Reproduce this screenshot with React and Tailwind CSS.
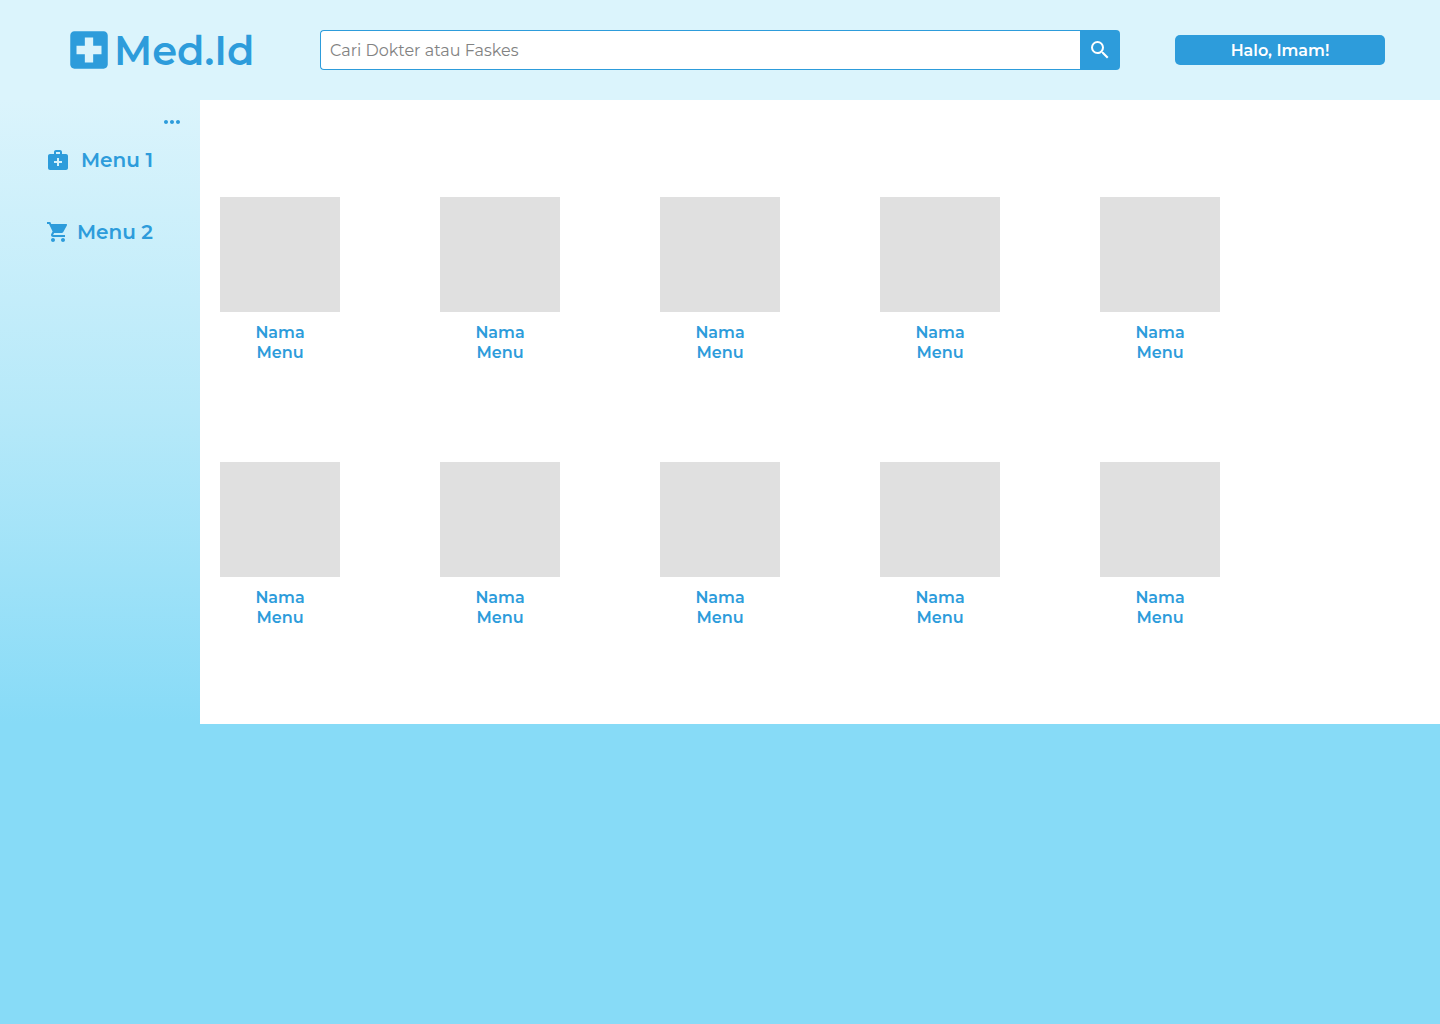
import {
  MdLocalHospital,
  MdMedicalServices,
  MdMoreHoriz,
  MdSearch,
  MdShoppingCart,
} from "react-icons/md";

const rows = [
  ["a1", "a2", "a3", "a4", "a5"],
  ["b1", "b2", "b3", "b4", "b5"],
];

const links = [
  { label: "Menu 1", Icon: MdMedicalServices },
  { label: "Menu 2", Icon: MdShoppingCart },
];

function Header() {
  return (
    <header className="flex h-[100px] items-center bg-[#dbf4fc]">
      <a href="#" className="flex w-80 shrink-0 items-center pl-16">
        <MdLocalHospital size={50} aria-hidden="true" />
        <span className="pt-0.5 text-[40px] leading-[50px] font-semibold">Med.Id</span>
      </a>
      <form className="flex h-10 flex-1" onSubmit={(e) => e.preventDefault()}>
        <input
          type="search"
          aria-label="Cari Dokter atau Faskes"
          placeholder="Cari Dokter atau Faskes"
          className="min-w-0 flex-1 rounded-l border border-r-0 border-[#2d9cdb] bg-white px-[9px] pt-0.5 text-base text-[#4f4f4f] outline-none placeholder:text-[#828282]"
        />
        <button
          type="submit"
          aria-label="Cari"
          className="flex w-10 items-center justify-center rounded-r bg-[#2d9cdb] text-white"
        >
          <MdSearch size={24} aria-hidden="true" />
        </button>
      </form>
      <div className="flex w-80 shrink-0 justify-center">
        <button
          type="button"
          className="h-[30px] w-[210px] rounded-[5px] bg-[#2d9cdb] pt-0.5 text-base leading-5 font-semibold text-white"
        >
          Halo, Imam!
        </button>
      </div>
    </header>
  );
}

function Sidebar() {
  return (
    <aside className="w-[200px] shrink-0 bg-linear-to-b from-[#dbf4fc] via-[#b6e9f9] to-[#87dbf7] pt-[10px]">
      <button type="button" aria-label="Lainnya" className="mr-4 ml-auto block">
        <MdMoreHoriz size={24} aria-hidden="true" />
      </button>
      <nav className="mt-[14px] flex flex-col gap-12 pr-[47px] pl-[46px]">
        {links.map(({ label, Icon }) => (
          <a key={label} href="#" className="flex items-center justify-between">
            <Icon size={24} aria-hidden="true" />
            <span className="text-xl leading-6 font-semibold">{label}</span>
          </a>
        ))}
      </nav>
    </aside>
  );
}

export default function App() {
  return (
    <div className="min-h-screen bg-[#87dbf7] font-[Montserrat,Inter,sans-serif] text-[#2d9cdb]">
      <Header />
      <div className="flex">
        <Sidebar />
        <main className="flex flex-1 flex-col gap-[99px] bg-white pt-[97px] pb-24 pl-5">
          {rows.map((row) => (
            <div key={row[0]} className="flex gap-[100px]">
              {row.map((id) => (
                <a
                  key={id}
                  href="#"
                  className="flex w-[120px] flex-col items-center gap-[11px] text-center text-base leading-5 font-semibold"
                >
                  <div className="h-[115px] w-full bg-[#e0e0e0]" />
                  <span>
                    Nama
                    <br />
                    Menu
                  </span>
                </a>
              ))}
            </div>
          ))}
        </main>
      </div>
    </div>
  );
}
